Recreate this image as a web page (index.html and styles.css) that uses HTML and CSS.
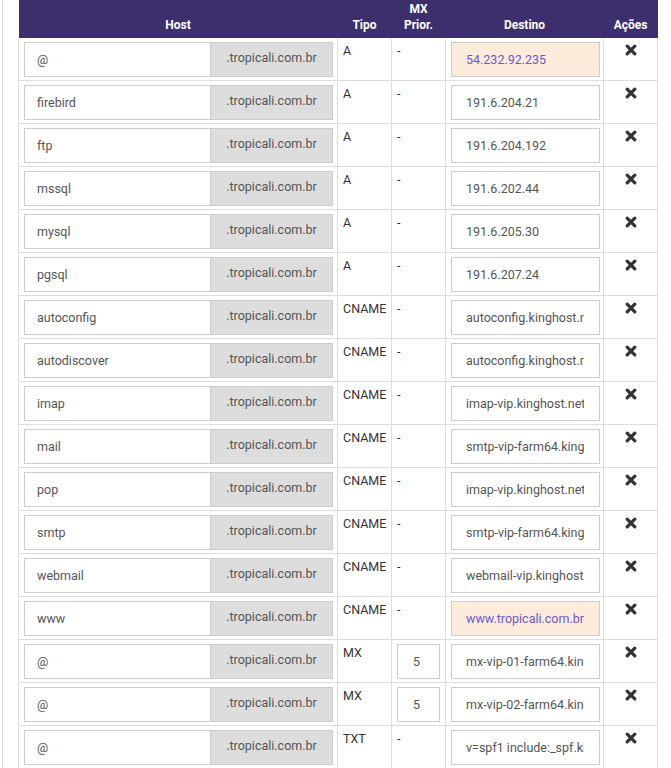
FILE: index.html
```html
<!DOCTYPE html>
<html lang="pt-BR">
<head>
<meta charset="utf-8">
<title>DNS</title>
<link rel="stylesheet" href="styles.css">
</head>
<body>
<div class="page">
  <table class="dns">
    <colgroup>
      <col class="c-host"><col class="c-tipo"><col class="c-mx"><col class="c-dest"><col class="c-act">
    </colgroup>
    <thead>
      <tr>
        <th>Host</th>
        <th>Tipo</th>
        <th>MX<br>Prior.</th>
        <th>Destino</th>
        <th>Ações</th>
      </tr>
    </thead>
    <tbody id="rows"></tbody>
  </table>
</div>
<script src="app.js"></script>
</body>
</html>
```
FILE: styles.css
```css
html, body {
  margin: 0;
  padding: 0;
  background: #fff;
}
body {
  font-family: Roboto, "Liberation Sans", Arial, sans-serif;
  font-size: 13px;
  color: #333;
}
.page {
  margin-left: 2px;
  border-left: 1px solid #ddd;
  padding-left: 15px;
  min-height: 768px;
  box-sizing: border-box;
}
.dns {
  border-collapse: collapse;
  table-layout: fixed;
  width: 639px;
}
.c-host { width: 319px; }
.c-tipo { width: 54px; }
.c-mx { width: 54px; }
.c-dest { width: 158px; }
.c-act { width: 54px; }

.dns thead tr {
  height: 38px;
}
.dns th {
  background: #3d2e6c;
  color: #fff;
  font-size: 12px;
  font-weight: 700;
  line-height: 16px;
  text-align: center;
  vertical-align: bottom;
  padding: 0 4px 5px;
}
.dns td {
  border: 1px solid #ddd;
  padding: 4px 4px 3px 5px;
  vertical-align: top;
  line-height: 18px;
}
.dns tbody tr:first-child td {
  border-top: 0;
}
.dns td.tipo, .dns td.mx {
  font-size: 12.5px;
}
.group {
  display: flex;
}
.field {
  box-sizing: border-box;
  height: 35px;
  border: 1px solid #ccc;
  background: #fff;
  font-family: Roboto, "Liberation Sans", Arial, sans-serif;
  font-size: 12.5px;
  color: #555;
  padding: 6px 12px;
  margin: 0;
  outline: none;
  border-radius: 0;
}
.host-input {
  width: 187px;
}
.addon {
  box-sizing: border-box;
  width: 122px;
  height: 35px;
  border: 1px solid #ccc;
  border-left: 0;
  background: #ddd;
  color: #555;
  font-size: 12.5px;
  display: flex;
  align-items: center;
  justify-content: center;
  padding-bottom: 3px;
}
.mx-input {
  width: 43px;
  padding: 6px 15px;
}
.dest-input {
  width: 149px;
  padding: 6px 15px 6px 14px;
}
.dest-input.changed {
  background: #fdecdc;
  color: #6a5acd;
}
.act {
  text-align: center;
}
.remove {
  display: block;
  margin: 2px auto 0;
  width: 12px;
  height: 12px;
}
```
FILE: app.js
```js
var rows = [
  ["@", "A", "-", "54.232.92.235", true],
  ["firebird", "A", "-", "191.6.204.21"],
  ["ftp", "A", "-", "191.6.204.192"],
  ["mssql", "A", "-", "191.6.202.44"],
  ["mysql", "A", "-", "191.6.205.30"],
  ["pgsql", "A", "-", "191.6.207.24"],
  ["autoconfig", "CNAME", "-", "autoconfig.kinghost.net"],
  ["autodiscover", "CNAME", "-", "autoconfig.kinghost.net"],
  ["imap", "CNAME", "-", "imap-vip.kinghost.net"],
  ["mail", "CNAME", "-", "smtp-vip-farm64.kinghost.net"],
  ["pop", "CNAME", "-", "imap-vip.kinghost.net"],
  ["smtp", "CNAME", "-", "smtp-vip-farm64.kinghost.net"],
  ["webmail", "CNAME", "-", "webmail-vip.kinghost.net"],
  ["www", "CNAME", "-", "www.tropicali.com.br", true],
  ["@", "MX", "5", "mx-vip-01-farm64.kinghost.net"],
  ["@", "MX", "5", "mx-vip-02-farm64.kinghost.net"],
  ["@", "TXT", "-", "v=spf1 include:_spf.kinghost.net ~all"]
];
var icon = '<svg class="remove" viewBox="0 0 12 12"><path d="M2.2 2.2 L9.8 9.8 M9.8 2.2 L2.2 9.8" stroke="#333" stroke-width="3.2" stroke-linecap="round" fill="none"/></svg>';
var tb = document.getElementById("rows");
var html = "";
rows.forEach(function (r) {
  var mx = r[1] === "MX"
    ? '<input class="field mx-input" value="' + r[2] + '">'
    : r[2];
  html += '<tr>' +
    '<td><div class="group"><input class="field host-input" value="' + r[0] + '"><span class="addon">.tropicali.com.br</span></div></td>' +
    '<td class="tipo">' + r[1] + '</td>' +
    '<td class="mx">' + mx + '</td>' +
    '<td><input class="field dest-input' + (r[4] ? ' changed' : '') + '" value="' + r[3] + '"></td>' +
    '<td class="act">' + icon + '</td>' +
    '</tr>';
});
tb.innerHTML = html;
```
